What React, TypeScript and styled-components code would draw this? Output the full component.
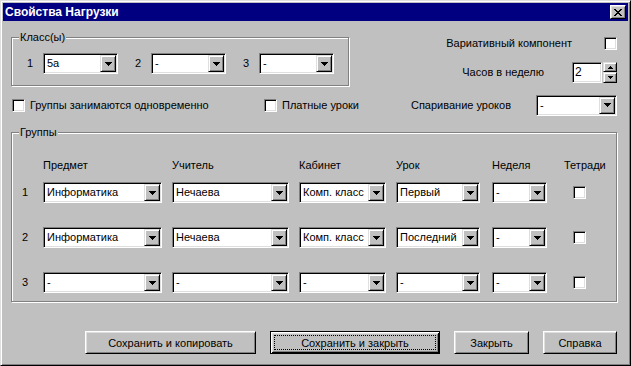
import React from "react";
import styled, { createGlobalStyle } from "styled-components";

const GlobalStyle = createGlobalStyle`
  * { box-sizing: border-box; }
  html, body { margin: 0; padding: 0; background: #c0c0c0; }
  body {
    font-family: "Liberation Sans", Arial, sans-serif;
    font-size: 11px;
    color: #000;
  }
`;

const Window = styled.div`
  width: 631px;
  height: 366px;
  display: flex;
  flex-direction: column;
  background: #c0c0c0;
  border: 1px solid;
  border-color: #dfdfdf #000 #000 #dfdfdf;
  box-shadow: inset 1px 1px 0 #fff, inset -1px -1px 0 #808080;
  padding: 2px;
`;

const TitleBar = styled.div`
  flex: none;
  height: 18px;
  display: flex;
  align-items: center;
  justify-content: space-between;
  padding: 0 2px;
  background: #000080;
  color: #fff;
`;

const TitleText = styled.span`
  font-weight: bold;
  font-size: 12px;
  line-height: 18px;
`;

const CloseButton = styled.button`
  width: 16px;
  height: 14px;
  padding: 0;
  display: flex;
  align-items: center;
  justify-content: center;
  background: #c0c0c0;
  border: 1px solid;
  border-color: #fff #000 #000 #fff;
  box-shadow: inset 1px 1px 0 #dfdfdf, inset -1px -1px 0 #808080;
`;

const Body = styled.div`
  flex: 1;
  display: flex;
  flex-direction: column;
  padding: 10px 11px 9px 8px;
`;

const TopGrid = styled.div`
  display: grid;
  grid-template-columns: 338px 1fr;
  grid-template-rows: 55px 22px;
  row-gap: 8px;
`;

const GroupFrame = styled.div<{ $top: number; $pad: string }>`
  position: relative;
  margin-top: ${(p) => p.$top}px;
  padding: ${(p) => p.$pad};
  border: 1px solid #808080;
  box-shadow: inset 1px 1px 0 #fff, 1px 1px 0 #fff;
`;

const GroupLabel = styled.span`
  position: absolute;
  top: -7px;
  left: 7px;
  padding: 0 1px;
  line-height: 13px;
  background: #c0c0c0;
`;

const ClassRow = styled.div`
  display: flex;
  gap: 17px;
`;

const ClassItem = styled.div`
  display: flex;
  align-items: center;
`;

const NumLabel = styled.span<{ $w: number }>`
  width: ${(p) => p.$w}px;
  flex: none;
  line-height: 13px;
`;

const ComboBox = styled.div<{ $w: number }>`
  flex: none;
  width: ${(p) => p.$w}px;
  height: 21px;
  display: flex;
  background: #fff;
  border: 1px solid;
  border-color: #808080 #fff #fff #808080;
  box-shadow: inset 1px 1px 0 #000, inset -1px -1px 0 #dfdfdf;
  padding: 1px;
`;

const ComboText = styled.span`
  flex: 1;
  min-width: 0;
  overflow: hidden;
  white-space: nowrap;
  padding-left: 2px;
  line-height: 17px;
`;

const RaisedButton = styled.span<{ $w: number; $h: number }>`
  flex: none;
  width: ${(p) => p.$w}px;
  height: ${(p) => p.$h}px;
  display: flex;
  align-items: center;
  justify-content: center;
  background: #c0c0c0;
  border: 1px solid;
  border-color: #dfdfdf #000 #000 #dfdfdf;
  box-shadow: inset 1px 1px 0 #fff, inset -1px -1px 0 #808080;
`;

const CheckBox = styled.span`
  flex: none;
  display: inline-block;
  width: 13px;
  height: 13px;
  background: #fff;
  border: 1px solid;
  border-color: #808080 #fff #fff #808080;
  box-shadow: inset 1px 1px 0 #000, inset -1px -1px 0 #dfdfdf;
`;

const CheckRow = styled.div`
  display: grid;
  grid-template-columns: 252px auto;
  align-items: center;
  padding-left: 1px;
`;

const CheckLabel = styled.label`
  display: flex;
  align-items: center;
  gap: 5px;
  line-height: 13px;
  white-space: nowrap;
`;

const RightStack = styled.div`
  display: flex;
  flex-direction: column;
  align-items: flex-end;
  gap: 12px;
  padding-top: 6px;
`;

const FieldRow = styled.div<{ $gap: number }>`
  display: flex;
  align-items: center;
  justify-content: flex-end;
  gap: ${(p) => p.$gap}px;
  line-height: 13px;
  white-space: nowrap;
`;

const SpinBox = styled.div`
  display: flex;
  gap: 1px;
`;

const SpinEdit = styled.div`
  width: 30px;
  height: 21px;
  background: #fff;
  border: 1px solid;
  border-color: #808080 #fff #fff #808080;
  box-shadow: inset 1px 1px 0 #000, inset -1px -1px 0 #dfdfdf;
  padding: 1px 1px 1px 2px;
  line-height: 17px;
  font-size: 12px;
`;

const SpinButtons = styled.div`
  display: flex;
  flex-direction: column;
`;

const ColumnsGrid = styled.div`
  display: grid;
  grid-template-columns: 21px 129px 127px 97px 96px 72px 1fr;
  align-items: center;
`;

const HeaderRow = styled(ColumnsGrid)`
  line-height: 13px;
  margin-bottom: 10px;
`;

const Rows = styled.div`
  display: flex;
  flex-direction: column;
  gap: 24px;
`;

const DataRow = styled(ColumnsGrid)`
  height: 21px;
`;

const CellCheck = styled.div`
  padding-left: 9px;
  display: flex;
`;

const ButtonBar = styled.div`
  margin-top: auto;
  display: flex;
  justify-content: flex-end;
  gap: 14px;
`;

const DialogButton = styled.button<{ $w: number; $default?: boolean }>`
  width: ${(p) => p.$w}px;
  height: 23px;
  padding: 0;
  font-family: "Liberation Sans", Arial, sans-serif;
  font-size: 11px;
  color: #000;
  background: #c0c0c0;
  border: 1px solid;
  border-color: ${(p) => (p.$default ? "#000" : "#fff #000 #000 #fff")};
  box-shadow: ${(p) =>
    p.$default
      ? "inset 1px 1px 0 #fff, inset -1px -1px 0 #000, inset 2px 2px 0 #dfdfdf, inset -2px -2px 0 #808080"
      : "inset 1px 1px 0 #dfdfdf, inset -1px -1px 0 #808080"};
  outline: ${(p) => (p.$default ? "1px dotted #000" : "none")};
  outline-offset: -5px;
`;

const DownArrow = () => (
  <svg width="7" height="4" viewBox="0 0 7 4" shapeRendering="crispEdges" fill="#000">
    <rect x="0" y="0" width="7" height="1" />
    <rect x="1" y="1" width="5" height="1" />
    <rect x="2" y="2" width="3" height="1" />
    <rect x="3" y="3" width="1" height="1" />
  </svg>
);

const SmallArrow = ({ up }: { up?: boolean }) => (
  <svg width="5" height="3" viewBox="0 0 5 3" shapeRendering="crispEdges" fill="#000">
    {up ? (
      <>
        <rect x="2" y="0" width="1" height="1" />
        <rect x="1" y="1" width="3" height="1" />
        <rect x="0" y="2" width="5" height="1" />
      </>
    ) : (
      <>
        <rect x="0" y="0" width="5" height="1" />
        <rect x="1" y="1" width="3" height="1" />
        <rect x="2" y="2" width="1" height="1" />
      </>
    )}
  </svg>
);

const CloseGlyph = () => (
  <svg width="8" height="7" viewBox="0 0 8 7" shapeRendering="crispEdges" fill="#000">
    <rect x="0" y="0" width="2" height="1" />
    <rect x="6" y="0" width="2" height="1" />
    <rect x="1" y="1" width="2" height="1" />
    <rect x="5" y="1" width="2" height="1" />
    <rect x="2" y="2" width="4" height="1" />
    <rect x="3" y="3" width="2" height="1" />
    <rect x="2" y="4" width="4" height="1" />
    <rect x="1" y="5" width="2" height="1" />
    <rect x="5" y="5" width="2" height="1" />
    <rect x="0" y="6" width="2" height="1" />
    <rect x="6" y="6" width="2" height="1" />
  </svg>
);

const Combo = ({ w, value }: { w: number; value: string }) => (
  <ComboBox $w={w}>
    <ComboText>{value}</ComboText>
    <RaisedButton $w={16} $h={17}>
      <DownArrow />
    </RaisedButton>
  </ComboBox>
);

const classes = [
  { n: "1", v: "5а" },
  { n: "2", v: "-" },
  { n: "3", v: "-" },
];

const columns = ["Предмет", "Учитель", "Кабинет", "Урок", "Неделя", "Тетради"];
const widths = [119, 117, 87, 84, 55];

const groups = [
  ["Информатика", "Нечаева", "Комп. класс", "Первый", "-"],
  ["Информатика", "Нечаева", "Комп. класс", "Последний", "-"],
  ["-", "-", "-", "-", "-"],
];

const buttons = [
  { label: "Сохранить и копировать", w: 171 },
  { label: "Сохранить и закрыть", w: 170, def: true },
  { label: "Закрыть", w: 75 },
  { label: "Справка", w: 74 },
];

export default function App() {
  return (
    <>
      <GlobalStyle />
      <Window>
        <TitleBar>
          <TitleText>Свойства Нагрузки</TitleText>
          <CloseButton aria-label="Закрыть">
            <CloseGlyph />
          </CloseButton>
        </TitleBar>
        <Body>
          <TopGrid>
            <GroupFrame $top={6} $pad="15px 0 11px 15px">
              <GroupLabel>Класс(ы)</GroupLabel>
              <ClassRow>
                {classes.map((c) => (
                  <ClassItem key={c.n}>
                    <NumLabel $w={16}>{c.n}</NumLabel>
                    <Combo w={75} value={c.v} />
                  </ClassItem>
                ))}
              </ClassRow>
            </GroupFrame>
            <RightStack>
              <FieldRow $gap={32}>
                <span>Вариативный компонент</span>
                <CheckBox />
              </FieldRow>
              <FieldRow $gap={28}>
                <span>Часов в неделю</span>
                <SpinBox>
                  <SpinEdit>2</SpinEdit>
                  <SpinButtons>
                    <RaisedButton $w={14} $h={10}>
                      <SmallArrow up />
                    </RaisedButton>
                    <RaisedButton $w={14} $h={11}>
                      <SmallArrow />
                    </RaisedButton>
                  </SpinButtons>
                </SpinBox>
              </FieldRow>
            </RightStack>
            <CheckRow>
              <CheckLabel>
                <CheckBox />
                Группы занимаются одновременно
              </CheckLabel>
              <CheckLabel>
                <CheckBox />
                Платные уроки
              </CheckLabel>
            </CheckRow>
            <FieldRow $gap={25}>
              <span>Спаривание уроков</span>
              <Combo w={81} value="-" />
            </FieldRow>
          </TopGrid>

          <GroupFrame $top={16} $pad="26px 0 8px 10px">
            <GroupLabel>Группы</GroupLabel>
            <HeaderRow>
              <span />
              {columns.map((c) => (
                <span key={c}>{c}</span>
              ))}
            </HeaderRow>
            <Rows>
              {groups.map((row, i) => (
                <DataRow key={i}>
                  <NumLabel $w={21}>{i + 1}</NumLabel>
                  {row.map((v, j) => (
                    <div key={j}>
                      <Combo w={widths[j]} value={v} />
                    </div>
                  ))}
                  <CellCheck>
                    <CheckBox />
                  </CellCheck>
                </DataRow>
              ))}
            </Rows>
          </GroupFrame>

          <ButtonBar>
            {buttons.map((b) => (
              <DialogButton key={b.label} $w={b.w} $default={b.def}>
                {b.label}
              </DialogButton>
            ))}
          </ButtonBar>
        </Body>
      </Window>
    </>
  );
}
